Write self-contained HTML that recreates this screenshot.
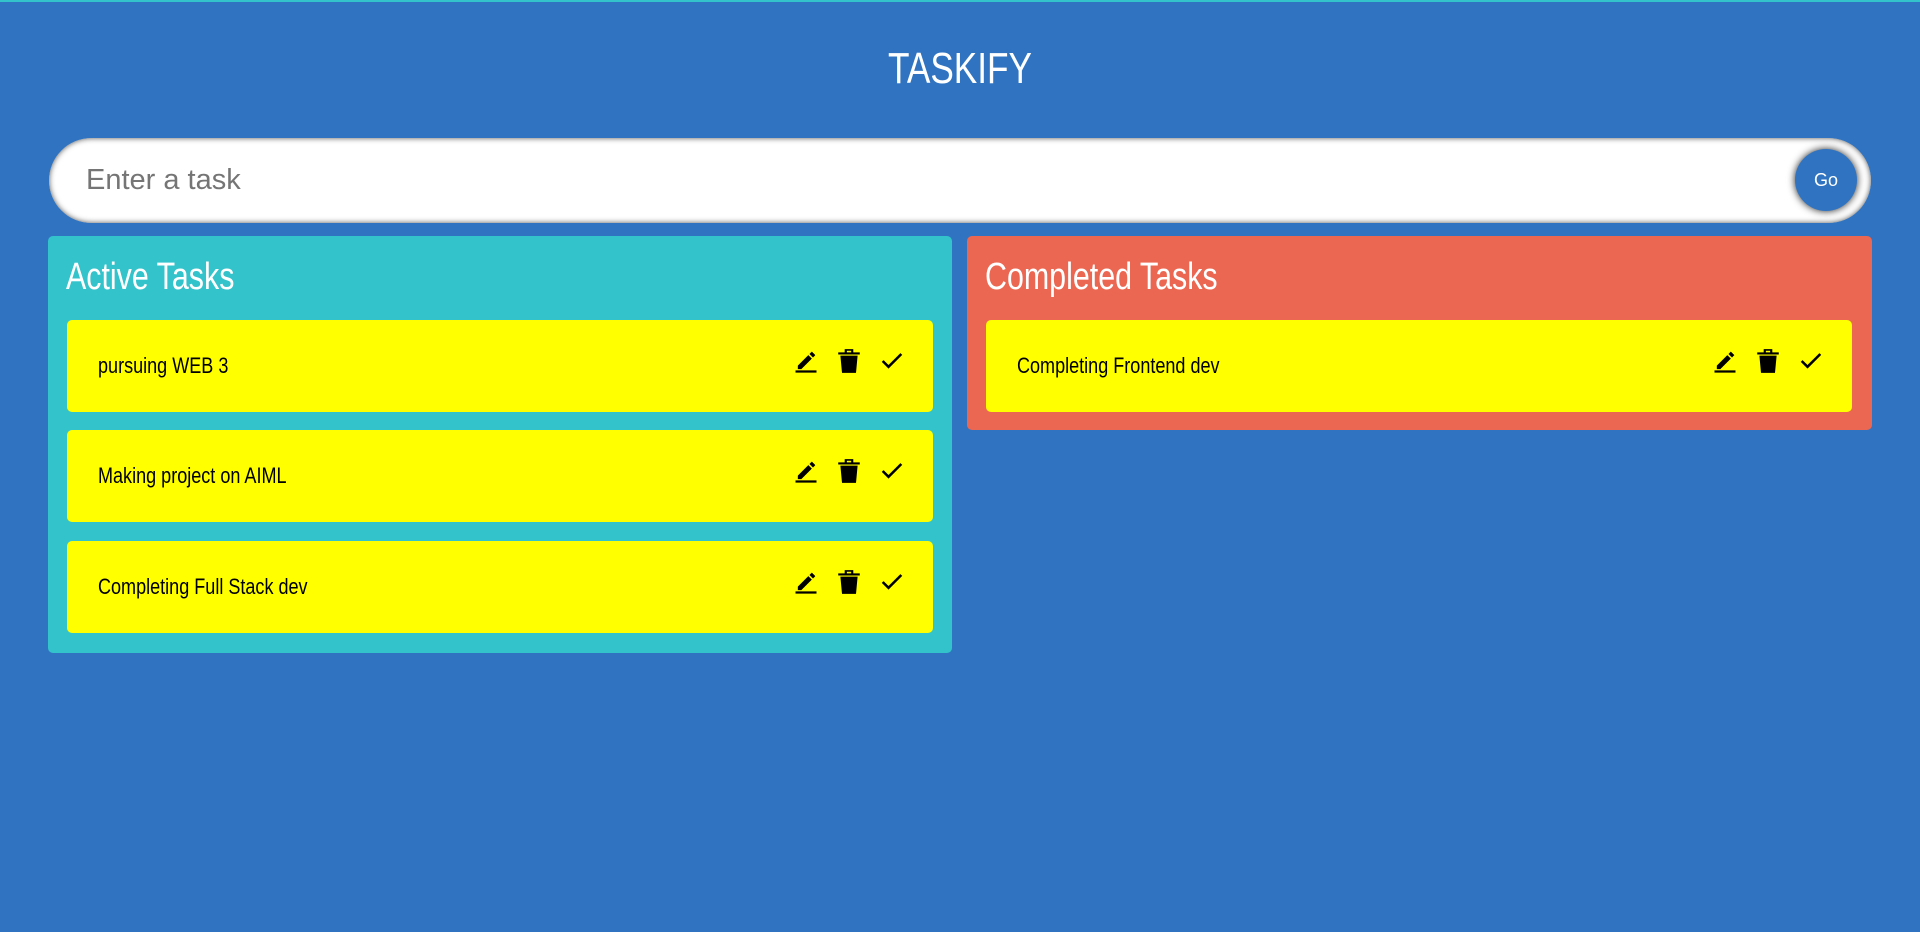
<!DOCTYPE html>
<html><head><meta charset="utf-8"><style>
*{box-sizing:border-box;margin:0;padding:0}
body{width:1920px;height:932px;background:#3074c1;font-family:"Liberation Sans",sans-serif;border-top:2px solid #33c3cb;position:relative;overflow:hidden}
.title{position:absolute;top:42px;width:100%;text-align:center;color:#fff;font-size:44px;transform:scaleX(.8)}
.input{position:absolute;left:49px;top:136px;width:1822px;height:85px;background:#fff;border-radius:43px;box-shadow:inset 0 0 6px #555;}
.input span{position:absolute;left:37px;top:26px;font-size:29px;color:#757575}
.go{position:absolute;left:1795px;top:147px;width:62px;height:62px;border-radius:50%;background:#3074c1;color:#fff;font-size:18px;text-align:center;line-height:62px;box-shadow:0 0 8px #222}
.panel{position:absolute;top:234px;border-radius:5px}
.panel h2{position:absolute;left:18px;top:20px;color:#fff;font-weight:normal;font-size:38px;transform:scaleX(.8);transform-origin:left}
.card{position:absolute;left:19px;width:866px;height:92px;background:#ff0;border-radius:5px}
.card .t{position:absolute;left:31px;top:33px;font-size:22px;transform:scaleX(.82);transform-origin:left}
.ic{position:absolute;top:27px}
</style></head><body>
<div class="title">TASKIFY</div>
<div class="input"><span>Enter a task</span></div>
<div class="go">Go</div>
<div class="panel" style="left:48px;width:904px;height:417px;background:#33c3cb">
<h2>Active Tasks</h2>
<div class="card" style="top:84px"><div class="t">pursuing WEB 3</div>ICONS</div>
<div class="card" style="top:194px"><div class="t">Making project on AIML</div>ICONS</div>
<div class="card" style="top:305px"><div class="t">Completing Full Stack dev</div>ICONS</div>
</div>
<div class="panel" style="left:967px;width:905px;height:194px;background:#ec6751">
<h2>Completed Tasks</h2>
<div class="card" style="top:84px"><div class="t">Completing Frontend dev</div>ICONS</div>
</div>
<script>
var s='<svg class="ic" style="left:725px" width="28" height="28" viewBox="0 0 24 24"><path d="M3 20h18v2H3z M5 16l9-9 3 3-9 9H5z M15 6l2-2 3 3-2 2z" fill="#000"/></svg>'+
'<svg class="ic" style="left:769px" width="26" height="28" viewBox="0 0 24 26"><path d="M2 5h20v2H2z M8 5V2h8v3h-2V3.5h-4V5z M4 8h16l-1.5 16h-13z" fill="#000"/></svg>'+
'<svg class="ic" style="left:811px" width="28" height="28" viewBox="0 0 24 24"><path d="M4 12l5 5L20 6" fill="none" stroke="#000" stroke-width="2.2"/></svg>';
document.querySelectorAll('.card').forEach(function(c){c.innerHTML=c.innerHTML.replace('ICONS',s)});
</script>
</body></html>
